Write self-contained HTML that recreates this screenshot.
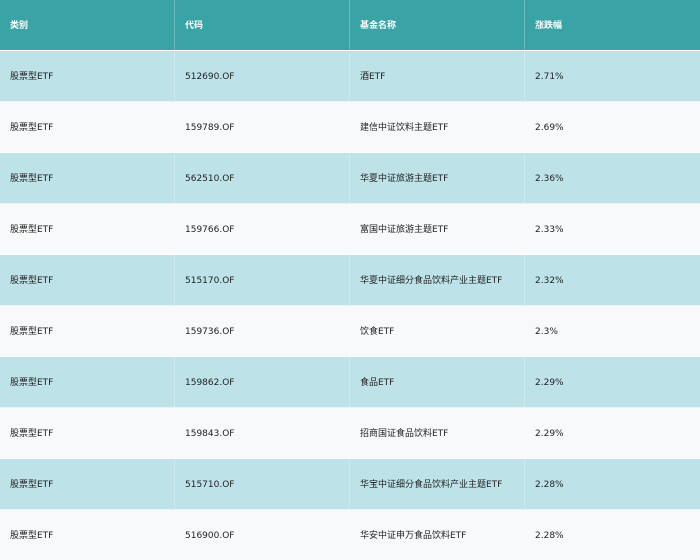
<!DOCTYPE html>
<html><head><meta charset="utf-8"><style>
body{margin:0;width:700px;height:560px;overflow:hidden;font-family:"DejaVu Sans","Noto Sans CJK SC",sans-serif;font-size:9px;color:#222}
.r{display:flex;height:51px;box-sizing:border-box}
.r.h{height:50px;background:#3aa3a6;color:#fff;font-weight:bold}
.r div{width:175px;box-sizing:border-box;padding:20px 0 0 10px;border-right:1px solid rgba(255,255,255,.25);white-space:nowrap;line-height:12px;height:100%}
.r div:last-child{border-right:none}
.o{background:#bde3e9;border-top:1px solid #fff}
.e{background:#f7f9fb;border-top:1px solid #eef2f5}
</style></head><body>
<div class="r h"><div>类别</div><div>代码</div><div>基金名称</div><div>涨跌幅</div></div>
<div class="r o"><div>股票型ETF</div><div>512690.OF</div><div>酒ETF</div><div>2.71%</div></div>
<div class="r e"><div>股票型ETF</div><div>159789.OF</div><div>建信中证饮料主题ETF</div><div>2.69%</div></div>
<div class="r o"><div>股票型ETF</div><div>562510.OF</div><div>华夏中证旅游主题ETF</div><div>2.36%</div></div>
<div class="r e"><div>股票型ETF</div><div>159766.OF</div><div>富国中证旅游主题ETF</div><div>2.33%</div></div>
<div class="r o"><div>股票型ETF</div><div>515170.OF</div><div>华夏中证细分食品饮料产业主题ETF</div><div>2.32%</div></div>
<div class="r e"><div>股票型ETF</div><div>159736.OF</div><div>饮食ETF</div><div>2.3%</div></div>
<div class="r o"><div>股票型ETF</div><div>159862.OF</div><div>食品ETF</div><div>2.29%</div></div>
<div class="r e"><div>股票型ETF</div><div>159843.OF</div><div>招商国证食品饮料ETF</div><div>2.29%</div></div>
<div class="r o"><div>股票型ETF</div><div>515710.OF</div><div>华宝中证细分食品饮料产业主题ETF</div><div>2.28%</div></div>
<div class="r e"><div>股票型ETF</div><div>516900.OF</div><div>华安中证申万食品饮料ETF</div><div>2.28%</div></div>
</body></html>
